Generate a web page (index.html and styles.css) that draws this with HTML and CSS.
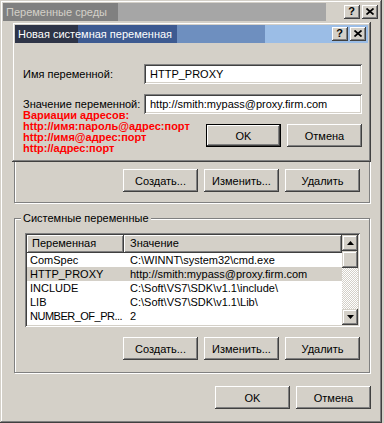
FILE: index.html
```html
<!DOCTYPE html>
<html lang="ru">
<head>
<meta charset="utf-8">
<title>Переменные среды</title>
<link rel="stylesheet" href="styles.css">
</head>
<body>
<div class="window">
  <div class="titlebar outer-bar">
    <div class="title title-inactive">Переменные среды</div>
    <div class="tb-buttons">
      <span class="tbbtn"><span class="q">?</span></span>
      <span class="tbbtn"><svg class="x" width="8" height="7" viewBox="0 0 8 7"><path d="M0.5 0.5 L7.5 6.5 M7.5 0.5 L0.5 6.5" stroke="#000" stroke-width="1.7" fill="none"/></svg></span>
    </div>
  </div>
  <div class="content">
    <div class="group group-user">
      <div class="btn-row">
        <button class="btn">Создать...</button>
        <button class="btn">Изменить...</button>
        <button class="btn">Удалить</button>
      </div>
    </div>
    <div class="group group-sys">
      <span class="legend">Системные переменные</span>
      <div class="list">
        <div class="list-main">
          <div class="list-header">
            <div class="hcell c1">Переменная</div>
            <div class="hcell c2">Значение</div>
          </div>
          <div class="row"><div class="c1">ComSpec</div><div class="c2">C:\WINNT\system32\cmd.exe</div></div>
          <div class="row sel"><div class="c1">HTTP_PROXY</div><div class="c2">http://smith:mypass@proxy.firm.com</div></div>
          <div class="row"><div class="c1">INCLUDE</div><div class="c2">C:\Soft\VS7\SDK\v1.1\include\</div></div>
          <div class="row"><div class="c1">LIB</div><div class="c2">C:\Soft\VS7\SDK\v1.1\Lib\</div></div>
          <div class="row"><div class="c1 tight">NUMBER_OF_PR...</div><div class="c2">2</div></div>
        </div>
        <div class="scrollbar">
          <span class="sbtn"><svg width="7" height="4" viewBox="0 0 7 4"><path d="M3.5 0 L7 4 L0 4 Z" fill="#000"/></svg></span>
          <span class="thumb"></span>
          <span class="track"></span>
          <span class="sbtn"><svg width="7" height="4" viewBox="0 0 7 4"><path d="M0 0 L7 0 L3.5 4 Z" fill="#000"/></svg></span>
        </div>
      </div>
      <div class="btn-row">
        <button class="btn">Создать...</button>
        <button class="btn">Изменить...</button>
        <button class="btn">Удалить</button>
      </div>
    </div>
    <div class="btn-row bottom-row">
      <button class="btn">OK</button>
      <button class="btn">Отмена</button>
    </div>
  </div>

  <div class="dialog">
    <div class="titlebar inner-bar">
      <div class="title title-active">Новая системная переменная</div>
      <div class="tb-buttons">
        <span class="tbbtn"><span class="q">?</span></span>
        <span class="tbbtn"><svg class="x" width="8" height="7" viewBox="0 0 8 7"><path d="M0.5 0.5 L7.5 6.5 M7.5 0.5 L0.5 6.5" stroke="#000" stroke-width="1.7" fill="none"/></svg></span>
      </div>
    </div>
    <div class="dlg-body">
      <div class="field">
        <label class="flabel">Имя переменной:</label>
        <div class="input">HTTP_PROXY</div>
      </div>
      <div class="field">
        <label class="flabel">Значение переменной:</label>
        <div class="input">http://smith:mypass@proxy.firm.com</div>
      </div>
      <div class="dlg-bottom">
        <div class="notes">Вариации адресов:<br>http://имя:пароль@адрес:порт<br>http://имя@адрес:порт<br>http://адрес:порт</div>
        <div class="btn-row dlg-btns">
          <button class="btn default">OK</button>
          <button class="btn">Отмена</button>
        </div>
      </div>
    </div>
  </div>
</div>
</body>
</html>
```

FILE: styles.css
```css
* { box-sizing: border-box; }
html, body { margin: 0; padding: 0; }
body {
  width: 384px;
  height: 423px;
  overflow: hidden;
  background: #d4d0c8;
  font-family: "Liberation Sans", Arial, sans-serif;
  font-size: 11px;
  color: #000;
}

.window {
  position: relative;
  width: 382px;
  height: 423px;
  padding: 3px;
  background: #d4d0c8;
  box-shadow: inset -1px -1px 0 #404040, inset 1px 1px 0 #d4d0c8,
              inset -2px -2px 0 #808080, inset 2px 2px 0 #fff;
  display: flex;
  flex-direction: column;
}

/* title bars */
.titlebar { height: 18px; display: flex; align-items: center; }
.title {
  height: 18px;
  line-height: 18px;
  padding-left: 3px;
  white-space: nowrap;
}
.title-inactive {
  width: 323px;
  color: #d4d0c8;
  background: linear-gradient(to right, #808080 0 115px, #a6a6a6 115px);
}
.outer-bar .tb-buttons { margin-left: auto; margin-right: 1px; }
.inner-bar {
  background: linear-gradient(to right, #2e3447 0 63px, #3d5a91 63px 162px, #6e8fbf 162px 250px, #9bbde6 250px);
}
.title-active { flex: 1; color: #fff; }
.inner-bar .tb-buttons { margin-right: 2px; }
.tb-buttons { display: flex; gap: 2px; }
.tbbtn {
  width: 16px;
  height: 14px;
  background: #d4d0c8;
  display: flex;
  align-items: center;
  justify-content: center;
  box-shadow: inset -1px -1px 0 #404040, inset 1px 1px 0 #fff,
              inset -2px -2px 0 #808080;
}
.tbbtn .q { font-weight: bold; font-size: 11px; line-height: 11px; margin-top: -1px; margin-left: -1px; }
.tbbtn .x { display: block; margin-left: -1px; margin-top: -1px; }

/* content */
.content {
  flex: 1;
  padding: 8px 9px 0 11px;
  display: flex;
  flex-direction: column;
}

.group {
  position: relative;
  border: 1px solid #808080;
  box-shadow: 1px 1px 0 #fff, inset 1px 1px 0 #fff;
}
.group-user {
  height: 174px;
  display: flex;
  flex-direction: column;
  justify-content: flex-end;
  padding: 0 9px 10px 10px;
}
.group-sys {
  margin-top: 15px;
  height: 155px;
  padding: 14px 9px 0 10px;
}
.legend {
  position: absolute;
  left: 6px;
  top: -7px;
  padding: 0 2px;
  line-height: 13px;
  background: #d4d0c8;
}

.btn-row { display: flex; justify-content: flex-end; gap: 6px; }
.group-sys .btn-row { margin-top: 10px; }
.bottom-row { margin-top: 13px; margin-right: -1px; }

.btn {
  width: 75px;
  height: 23px;
  padding: 0;
  border: none;
  background: #d4d0c8;
  font: inherit;
  color: #000;
  box-shadow: inset -1px -1px 0 #404040, inset 1px 1px 0 #fff,
              inset -2px -2px 0 #808080, inset 2px 2px 0 #d4d0c8;
}
.btn.default {
  box-shadow: inset 0 0 0 1px #000, inset -2px -2px 0 #404040,
              inset 2px 2px 0 #fff, inset -3px -3px 0 #808080;
}

/* list view */
.list {
  height: 94px;
  display: flex;
  padding: 2px;
  background: #fff;
  box-shadow: inset 1px 1px 0 #808080, inset -1px -1px 0 #fff,
              inset 2px 2px 0 #404040, inset -2px -2px 0 #d4d0c8;
}
.list-main { flex: 1; display: flex; flex-direction: column; overflow: hidden; }
.list-header { height: 18px; display: flex; flex: none; }
.hcell {
  height: 18px;
  line-height: 17px;
  background: #d4d0c8;
  white-space: nowrap;
  box-shadow: inset -1px -1px 0 #404040, inset 1px 1px 0 #fff,
              inset -2px -2px 0 #808080;
}
.hcell.c1 { width: 97px; padding-left: 5px; }
.hcell.c2 { flex: 1; padding-left: 6px; }
.row { height: 14px; line-height: 14px; display: flex; white-space: nowrap; flex: none; }
.row .c1 { width: 97px; padding-left: 3px; }
.row .c1.tight { letter-spacing: -0.5px; }
.row .c2 { padding-left: 6px; }
.row.sel { background: #d4d0c8; }

.scrollbar { width: 16px; display: flex; flex-direction: column; }
.sbtn, .thumb {
  display: flex;
  align-items: center;
  justify-content: center;
  width: 16px;
  height: 16px;
  flex: none;
  background: #d4d0c8;
  box-shadow: inset -1px -1px 0 #404040, inset 1px 1px 0 #d4d0c8,
              inset -2px -2px 0 #808080, inset 2px 2px 0 #fff;
}
.thumb { height: 17px; }
.track {
  flex: 1;
  background-color: #fff;
  background-image: conic-gradient(#d4d0c8 25%, #fff 0 50%, #d4d0c8 0 75%, #fff 0);
  background-size: 2px 2px;
}

/* dialog */
.dialog {
  position: absolute;
  left: 12px;
  top: 22px;
  width: 359px;
  height: 140px;
  padding: 3px;
  background: #d4d0c8;
  box-shadow: inset -1px -1px 0 #404040, inset 1px 1px 0 #d4d0c8,
              inset -2px -2px 0 #808080, inset 2px 2px 0 #fff;
  display: flex;
  flex-direction: column;
}
.dlg-body { padding: 21px 6px 0 8px; display: flex; flex-direction: column; }
.field { display: flex; align-items: center; height: 20px; }
.field + .field { margin-top: 10px; }
.flabel { width: 121px; white-space: nowrap; }
.input {
  width: 218px;
  height: 20px;
  line-height: 20px;
  padding-left: 6px;
  background: #fff;
  white-space: nowrap;
  box-shadow: inset 1px 1px 0 #808080, inset -1px -1px 0 #fff,
              inset 2px 2px 0 #404040, inset -2px -2px 0 #d4d0c8;
}
.dlg-bottom { display: flex; margin-top: -4px; }
.notes {
  flex: 1;
  color: #ff0000;
  font-weight: bold;
  line-height: 11px;
  white-space: nowrap;
}
.dlg-btns { margin-top: 14px; align-self: flex-start; }
```
